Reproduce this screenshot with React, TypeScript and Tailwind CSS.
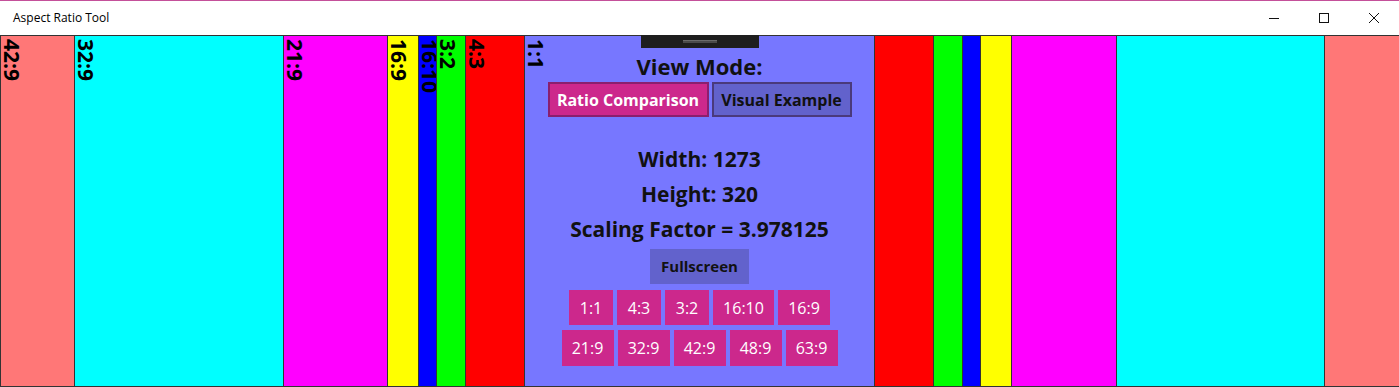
import React from 'react';

const font = { fontFamily: '"Open Sans", "Noto Sans", sans-serif' };

// nested ratio rectangles, widest first so the smaller ones sit on top
const rects = [
  { label: '42:9', w: 'w-full border-r-0', bg: 'bg-[#ff7777]' },
  { label: '32:9', w: 'w-[1251px]', bg: 'bg-[#00ffff]' },
  { label: '21:9', w: 'w-[834px]', bg: 'bg-[#ff00ff]' },
  { label: '16:9', w: 'w-[625px]', bg: 'bg-[#ffff00]' },
  { label: '16:10', w: 'w-[563px]', bg: 'bg-[#0000ff]' },
  { label: '3:2', w: 'w-[527px]', bg: 'bg-[#00ff00]' },
  { label: '4:3', w: 'w-[469px]', bg: 'bg-[#ff0000]' },
];

const row1 = [
  { t: '1:1', w: 'w-[44px]' },
  { t: '4:3', w: 'w-[44px]' },
  { t: '3:2', w: 'w-[44px]' },
  { t: '16:10', w: 'w-[61px]' },
  { t: '16:9', w: 'w-[52px]' },
];
const row2 = ['21:9', '32:9', '42:9', '48:9', '63:9'];

function Label({ text }: { text: string }) {
  return (
    <div className="pt-[3px]">
      <div className="[writing-mode:vertical-rl] text-[21px] font-bold leading-[22px] text-black whitespace-nowrap">{text}</div>
    </div>
  );
}

export default function App() {
  return (
    <div className="w-[1399px] h-[387px] overflow-hidden bg-white flex flex-col" style={font}>
      {/* window title bar */}
      <div className="h-[35px] shrink-0 border-t border-[#c4509a] flex items-center justify-between">
        <span className="pl-[13px] text-[12px] text-black">Aspect Ratio Tool</span>
        <div className="flex items-center h-full">
          <div className="w-[50px] h-full flex items-center justify-center">
            <svg width="12" height="12" viewBox="0 0 12 12"><path d="M1 6.5h10" stroke="#111" strokeWidth="1" /></svg>
          </div>
          <div className="w-[50px] h-full flex items-center justify-center">
            <svg width="12" height="12" viewBox="0 0 12 12"><rect x="1.5" y="1.5" width="9" height="9" fill="none" stroke="#111" strokeWidth="1" /></svg>
          </div>
          <div className="w-[50px] h-full flex items-center justify-center">
            <svg width="12" height="12" viewBox="0 0 12 12"><path d="M1 1l10 10M11 1L1 11" stroke="#111" strokeWidth="1" /></svg>
          </div>
        </div>
      </div>

      {/* ratio comparison area */}
      <div className="relative h-[352px] grid place-items-center overflow-hidden">
        {rects.map((r) => (
          <div key={r.label} className={`col-start-1 row-start-1 h-full border border-[#333] ${r.w} ${r.bg}`}>
            <Label text={r.label} />
          </div>
        ))}

        <div className="col-start-1 row-start-1 h-full w-[351px] border border-[#333] bg-[#7777ff] grid grid-cols-[22px_1fr_22px]">
          <Label text="1:1" />
          <div className="flex flex-col items-center pt-[16px] text-[#111]">
            <div className="text-[22px] font-bold leading-[28px] whitespace-nowrap">View Mode:</div>
            <div className="flex gap-[3px] mt-[2px]">
              <button className="w-[161px] h-[35px] bg-[#cc288c] border-2 border-[#8a1f6e] text-white text-[16px] font-bold">
                Ratio Comparison
              </button>
              <button className="w-[140px] h-[35px] bg-[#6262cc] border-2 border-[#4a3a7c] text-[#111] text-[16px] font-bold">
                Visual Example
              </button>
            </div>
            <div className="mt-[25px] text-[21px] font-bold leading-[35px]">Width: 1273</div>
            <div className="text-[21px] font-bold leading-[35px]">Height: 320</div>
            <div className="text-[21px] font-bold leading-[35px] whitespace-nowrap">Scaling Factor = 3.978125</div>
            <button className="mt-[2px] w-[99px] h-[35px] bg-[#6262cc] text-[#111] text-[15px] font-bold">Fullscreen</button>
            <div className="flex gap-[4px] mt-[6px]">
              {row1.map((b) => (
                <button key={b.t} className={`${b.w} h-[35px] bg-[#cc288c] text-white text-[16px]`}>{b.t}</button>
              ))}
            </div>
            <div className="flex gap-[4px] mt-[5px]">
              {row2.map((t) => (
                <button key={t} className="w-[52px] h-[36px] bg-[#cc288c] text-white text-[16px]">{t}</button>
              ))}
            </div>
          </div>
        </div>

        {/* system drag handle over the top edge */}
        <div className="absolute top-0 left-1/2 -translate-x-1/2 w-[118px] h-[13px] bg-[#1e1e1e] flex items-center justify-center">
          <div className="w-[34px] h-[3px] bg-[#4a4a4a] border-t border-[#6a6a6a]" />
        </div>
      </div>
    </div>
  );
}
